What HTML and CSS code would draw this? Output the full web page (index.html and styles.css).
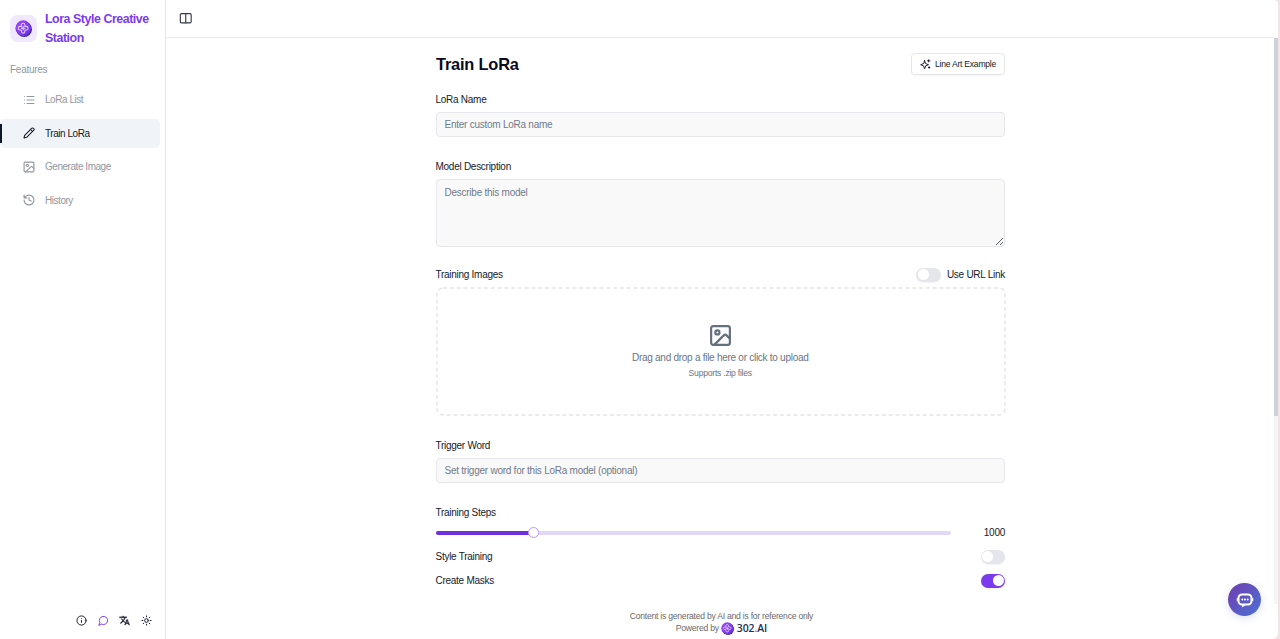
FILE: index.html
```html
<!DOCTYPE html>
<html lang="en">
<head>
<meta charset="utf-8">
<title>Lora Style Creative Station</title>
<link rel="stylesheet" href="styles.css">
</head>
<body>
<svg class="defs" width="0" height="0">
  <defs>
    <linearGradient id="ball" x1="0" y1="0" x2="1" y2="1"><stop offset="0" stop-color="#a04df5"/><stop offset="1" stop-color="#6a2be0"/></linearGradient>
    <symbol id="logo" viewBox="0 0 24 24">
      <circle cx="13" cy="13" r="11" fill="#3b2a9c"/>
      <circle cx="11.5" cy="11.5" r="11" fill="url(#ball)"/>
      <path d="M9 9V7a2.5 2.5 0 0 1 5 0v2h2a2.5 2.5 0 0 1 0 5h-2v2a2.5 2.5 0 0 1-5 0v-2H7a2.5 2.5 0 0 1 0-5zM11.5 9v5M9 11.5h5" fill="none" stroke="#e3ccff" stroke-width="1.5"/>
    </symbol>
    <symbol id="image" viewBox="0 0 24 24"><rect x="3" y="3" width="18" height="18" rx="2"/><circle cx="9" cy="9" r="2"/><path d="m21 15-3.1-3.1a2 2 0 0 0-2.8 0L6 21"/></symbol>
  </defs>
</svg>
<div class="app">
  <aside class="sidebar">
    <div class="brand">
      <span class="brand-mark"><svg width="17" height="17"><use href="#logo"/></svg></span>
      <span class="brand-name">Lora Style Creative<br>Station</span>
    </div>
    <div class="group">Features</div>
    <nav class="nav">
      <a class="item"><svg class="icon" viewBox="0 0 24 24"><path d="M8 5h14M8 12h14M8 19h14M3 5h.01M3 12h.01M3 19h.01"/></svg><span>LoRa List</span></a>
      <a class="item active"><svg class="icon" viewBox="0 0 24 24"><path d="M21.2 6.8a1 1 0 0 0-4-4L3.8 16.2a2 2 0 0 0-.5.8L2 21.4a.5.5 0 0 0 .6.6L7 20.7a2 2 0 0 0 .8-.5zM15 5l4 4"/></svg><span>Train LoRa</span></a>
      <a class="item"><svg class="icon" viewBox="1 1 22 22"><use href="#image" width="24" height="24"/></svg><span>Generate Image</span></a>
      <a class="item"><svg class="icon" viewBox="1 1 22 22"><path d="M3 12a9 9 0 1 0 9-9 9.75 9.75 0 0 0-6.74 2.74L3 8M3 3v5h5M12 7v5l4 2"/></svg><span>History</span></a>
    </nav>
    <div class="tools">
      <svg class="tool" viewBox="0 0 24 24"><circle cx="12" cy="12" r="10"/><path d="M12 16v-4M12 8h.01"/></svg>
      <svg class="tool chat" viewBox="0 0 24 24"><path d="M7.9 20A9 9 0 1 0 4 16.1L2 22Z"/></svg>
      <svg class="tool solid" viewBox="0 0 24 24"><path d="m12.87 15.07-2.54-2.51.03-.03A17.5 17.5 0 0 0 14.07 6H17V4h-7V2H8v2H1v2h11.17C11.5 7.92 10.44 9.75 9 11.35 8.07 10.32 7.3 9.19 6.69 8h-2c.73 1.63 1.73 3.17 2.98 4.56l-5.09 5.02L4 19l5-5 3.11 3.11zM18.5 10h-2L12 22h2l1.12-3h4.75L21 22h2zm-2.62 7 1.62-4.33L19.12 17z"/></svg>
      <svg class="tool" viewBox="0 0 24 24"><circle cx="12" cy="12" r="4"/><path d="M12 2v2M12 20v2M4.9 4.9l1.4 1.4M17.7 17.7l1.4 1.4M2 12h2M20 12h2M6.3 17.7l-1.4 1.4M19.1 4.9l-1.4 1.4"/></svg>
    </div>
  </aside>
  <section class="content">
    <header class="topbar"><svg class="panel" viewBox="0 0 24 24"><rect x="2" y="3" width="20" height="17" rx="2"/><path d="M12 3v17"/></svg></header>
    <div class="viewport">
      <main class="form">
        <div class="head"><h1>Train LoRa</h1><button class="example"><svg viewBox="0 0 24 24"><path d="M10 3.5 12.300 10l6.200 2.500L12.300 15 10 21.500 7.700 15l-6.200-2.500L7.700 10zM19 1.500v5M16.500 4h5M20 17v3M18.500 18.500h3"/></svg><span>Line Art Example</span></button></div>
        <label class="label">LoRa Name</label>
        <input class="field" placeholder="Enter custom LoRa name">
        <label class="label gap">Model Description</label>
        <textarea class="field area" placeholder="Describe this model"></textarea>
        <div class="row images"><span>Training Images</span><span class="toggle"><i class="switch"></i><span>Use URL Link</span></span></div>
        <div class="drop">
          <svg class="outline" width="570" height="129"><rect x="1" y="1" width="568" height="127" rx="6"/></svg>
          <svg class="drop-icon"><use href="#image"/></svg>
          <p class="drop-main">Drag and drop a file here or click to upload</p>
          <p class="drop-sub">Supports .zip files</p>
        </div>
        <label class="label gap">Trigger Word</label>
        <input class="field" placeholder="Set trigger word for this LoRa model (optional)">
        <label class="label gap">Training Steps</label>
        <div class="row steps"><div class="track"><div class="fill"></div><div class="thumb"></div></div><span class="value">1000</span></div>
        <div class="row option"><span>Style Training</span><i class="switch"></i></div>
        <div class="row option"><span>Create Masks</span><i class="switch on"></i></div>
      </main>
      <footer class="footer">
        <p>Content is generated by AI and is for reference only</p>
        <p class="powered"><span>Powered by</span><svg width="13" height="13"><use href="#logo"/></svg><b>302<em>.</em>AI</b></p>
      </footer>
    </div>
  </section>
  <div class="scrollbar"><div class="scroll-thumb"></div></div>
  <div class="bubble"><svg viewBox="0 0 20 20" width="20" height="20"><rect x="3.500" y="4.500" width="13" height="10" rx="3.500" stroke="#fff" stroke-width="2"/><path d="M2.300 8.500v2M17.700 8.500v2" stroke="#fff" stroke-width="1.200"/><path d="M7.500 15v2l2.500-2z" stroke="#fff" stroke-width=".6" fill="#fff"/><path d="M7.300 9.500h.01M10 9.500h.01M12.700 9.500h.01" stroke="#fff" stroke-width="2"/></svg></div>
</div>
</body>
</html>
```
FILE: styles.css
```css
* { box-sizing: border-box; }
body { margin: 0; background: #f4e4e4; font: 10px/16px "Liberation Sans", Arial, sans-serif; letter-spacing: -.27px; color: #151a29; overflow: hidden; }
p, h1 { margin: 0; }
svg { display: block; flex: none; fill: none; stroke: currentColor; stroke-width: 2.1; stroke-linecap: round; stroke-linejoin: round; }
.defs { position: absolute; }
#logo { stroke: none; }
.app { width: 1278px; height: 639px; display: flex; background: #fff; border-radius: 0 4px 6px 0; }
.sidebar { width: 166px; border-right: 1px solid #e5e7eb; display: flex; flex-direction: column; background: #fff; }
.brand { display: flex; align-items: center; gap: 8px; padding: 10px 0 0 10px; height: 47px; }
.brand-mark { width: 27px; height: 27px; border-radius: 8px; background: #f0e9fe; display: grid; place-items: center; }
.brand-name { font-size: 12.4px; line-height: 19px; font-weight: 700; letter-spacing: -.45px; color: #7c3aed; white-space: nowrap; }
.group { height: 14px; margin: 15px 0 9px 10px; color: #9297a1; }
.nav { display: flex; flex-direction: column; gap: 4.5px; letter-spacing: -.46px; }
.item { display: flex; align-items: center; gap: 10px; height: 29px; width: 160px; padding-left: 23px; color: #9297a1; }
.item span { padding-top: 1px; }
.icon { width: 12px; height: 12px; }
.item.active { color: #151a29; background: #f0f4f9 linear-gradient(#0f172a, #0f172a) 0 5px / 2px 19px no-repeat; border-radius: 5px; }
.tools { margin-top: auto; display: flex; gap: 10.5px; padding: 0 13.5px 13.5px 0; justify-content: flex-end; }
.tool { width: 11px; height: 11px; }
.tool.chat { color: #7c3aed; }
.tool.solid { fill: currentColor; stroke-width: .6; }
.content { flex: 1; display: flex; flex-direction: column; }
.topbar { height: 38px; border-bottom: 1px solid #e8eaee; padding: 12px 0 0 13px; color: #333946; }
.panel { width: 13.5px; height: 13px; }
.viewport { flex: 1; }
.form { width: 569.5px; margin-left: 269.5px; padding-top: 15px; display: flex; flex-direction: column; }
.head { display: flex; align-items: center; justify-content: space-between; height: 22px; }
h1 { font-size: 16.4px; line-height: 22px; letter-spacing: -.2px; margin-left: .5px; color: #090d1b; }
.example { height: 22px; width: 94px; display: flex; align-items: center; justify-content: center; gap: 4px; padding: 0; border: 1px solid #e5e7eb; border-radius: 4px; background: #fff; font: 8.6px/12px "Liberation Sans", Arial, sans-serif; letter-spacing: -.24px; color: #151a29; white-space: nowrap; box-shadow: 0 1px 1px #0000000a; }
.example svg { width: 11px; height: 11px; }
.label { margin-top: 17px; height: 14px; }
.label.gap { margin-top: 22px; }
.field { margin-top: 6px; width: 100%; height: 25px; border: 1px solid #e5e7eb; border-radius: 4px; background: #f9f9f9; padding: 0 8px; font: 10px/14px "Liberation Sans", Arial, sans-serif; letter-spacing: -.25px; outline: 0; }
.field::placeholder { color: #717989; opacity: 1; }
.area { height: 68px; padding-top: 6px; resize: vertical; }
.row { display: flex; align-items: center; justify-content: space-between; }
.images { height: 14px; margin-top: 21px; }
.toggle { display: flex; align-items: center; gap: 6px; }
.switch { display: block; width: 24.5px; height: 14px; border-radius: 7px; background: #e4e6eb; padding: 1.4px; box-shadow: 0 1px 2px #0000000d; }
.switch::before { content: ""; display: block; width: 11px; height: 11px; border-radius: 50%; background: #fff; }
.switch.on { background: #7c3aed; }
.switch.on::before { margin-left: auto; }
.drop { position: relative; margin-top: 5px; height: 129px; display: flex; flex-direction: column; align-items: center; padding-top: 35.5px; color: #6b7483; }
.outline { position: absolute; inset: 0; stroke: #e3e5e8; stroke-width: 1.4; stroke-dasharray: 4.1 2.7; stroke-linecap: butt; }
.drop-icon { width: 25px; height: 25px; color: #65707f; }
.drop-main { margin-top: 2.5px; }
.drop-sub { font-size: 8.6px; line-height: 14px; letter-spacing: -.24px; }
.steps { height: 14px; margin-top: 6.5px; }
.value, .option span { padding-top: 1px; }
.value { letter-spacing: -.27px; }
.track { position: relative; width: 515.5px; height: 4px; border-radius: 2px; background: #e2d6f9; }
.fill { width: 98px; height: 4px; border-radius: 2px; background: #7130e0; }
.thumb { position: absolute; left: 92.5px; top: -3.5px; width: 11px; height: 11px; border: 1px solid #b99af3; border-radius: 50%; background: #fff; }
.option { height: 14px; margin-top: 10px; }
.footer { margin-top: 22px; padding-left: 3px; text-align: center; font-size: 8.6px; line-height: 12px; letter-spacing: -.24px; color: #6a6a6e; }
.powered { display: flex; justify-content: center; align-items: center; gap: 2.5px; }
.powered b { font: 600 10.5px/12px "Open Sans", "Noto Sans", sans-serif; letter-spacing: -.1px; color: #233056; }
.powered em { color: #9b4df0; font-style: normal; }
.scrollbar { width: 4px; height: 566px; margin-top: 38px; background: #f4f5f7; }
.scroll-thumb { height: 378px; background: #ccd2dd; }
.bubble { position: fixed; left: 1228px; top: 583px; width: 33px; height: 33px; border-radius: 50%; background: linear-gradient(135deg, #713bad, #4b73d8); display: grid; place-items: center; box-shadow: 0 2px 8px #5060a030; }
```
